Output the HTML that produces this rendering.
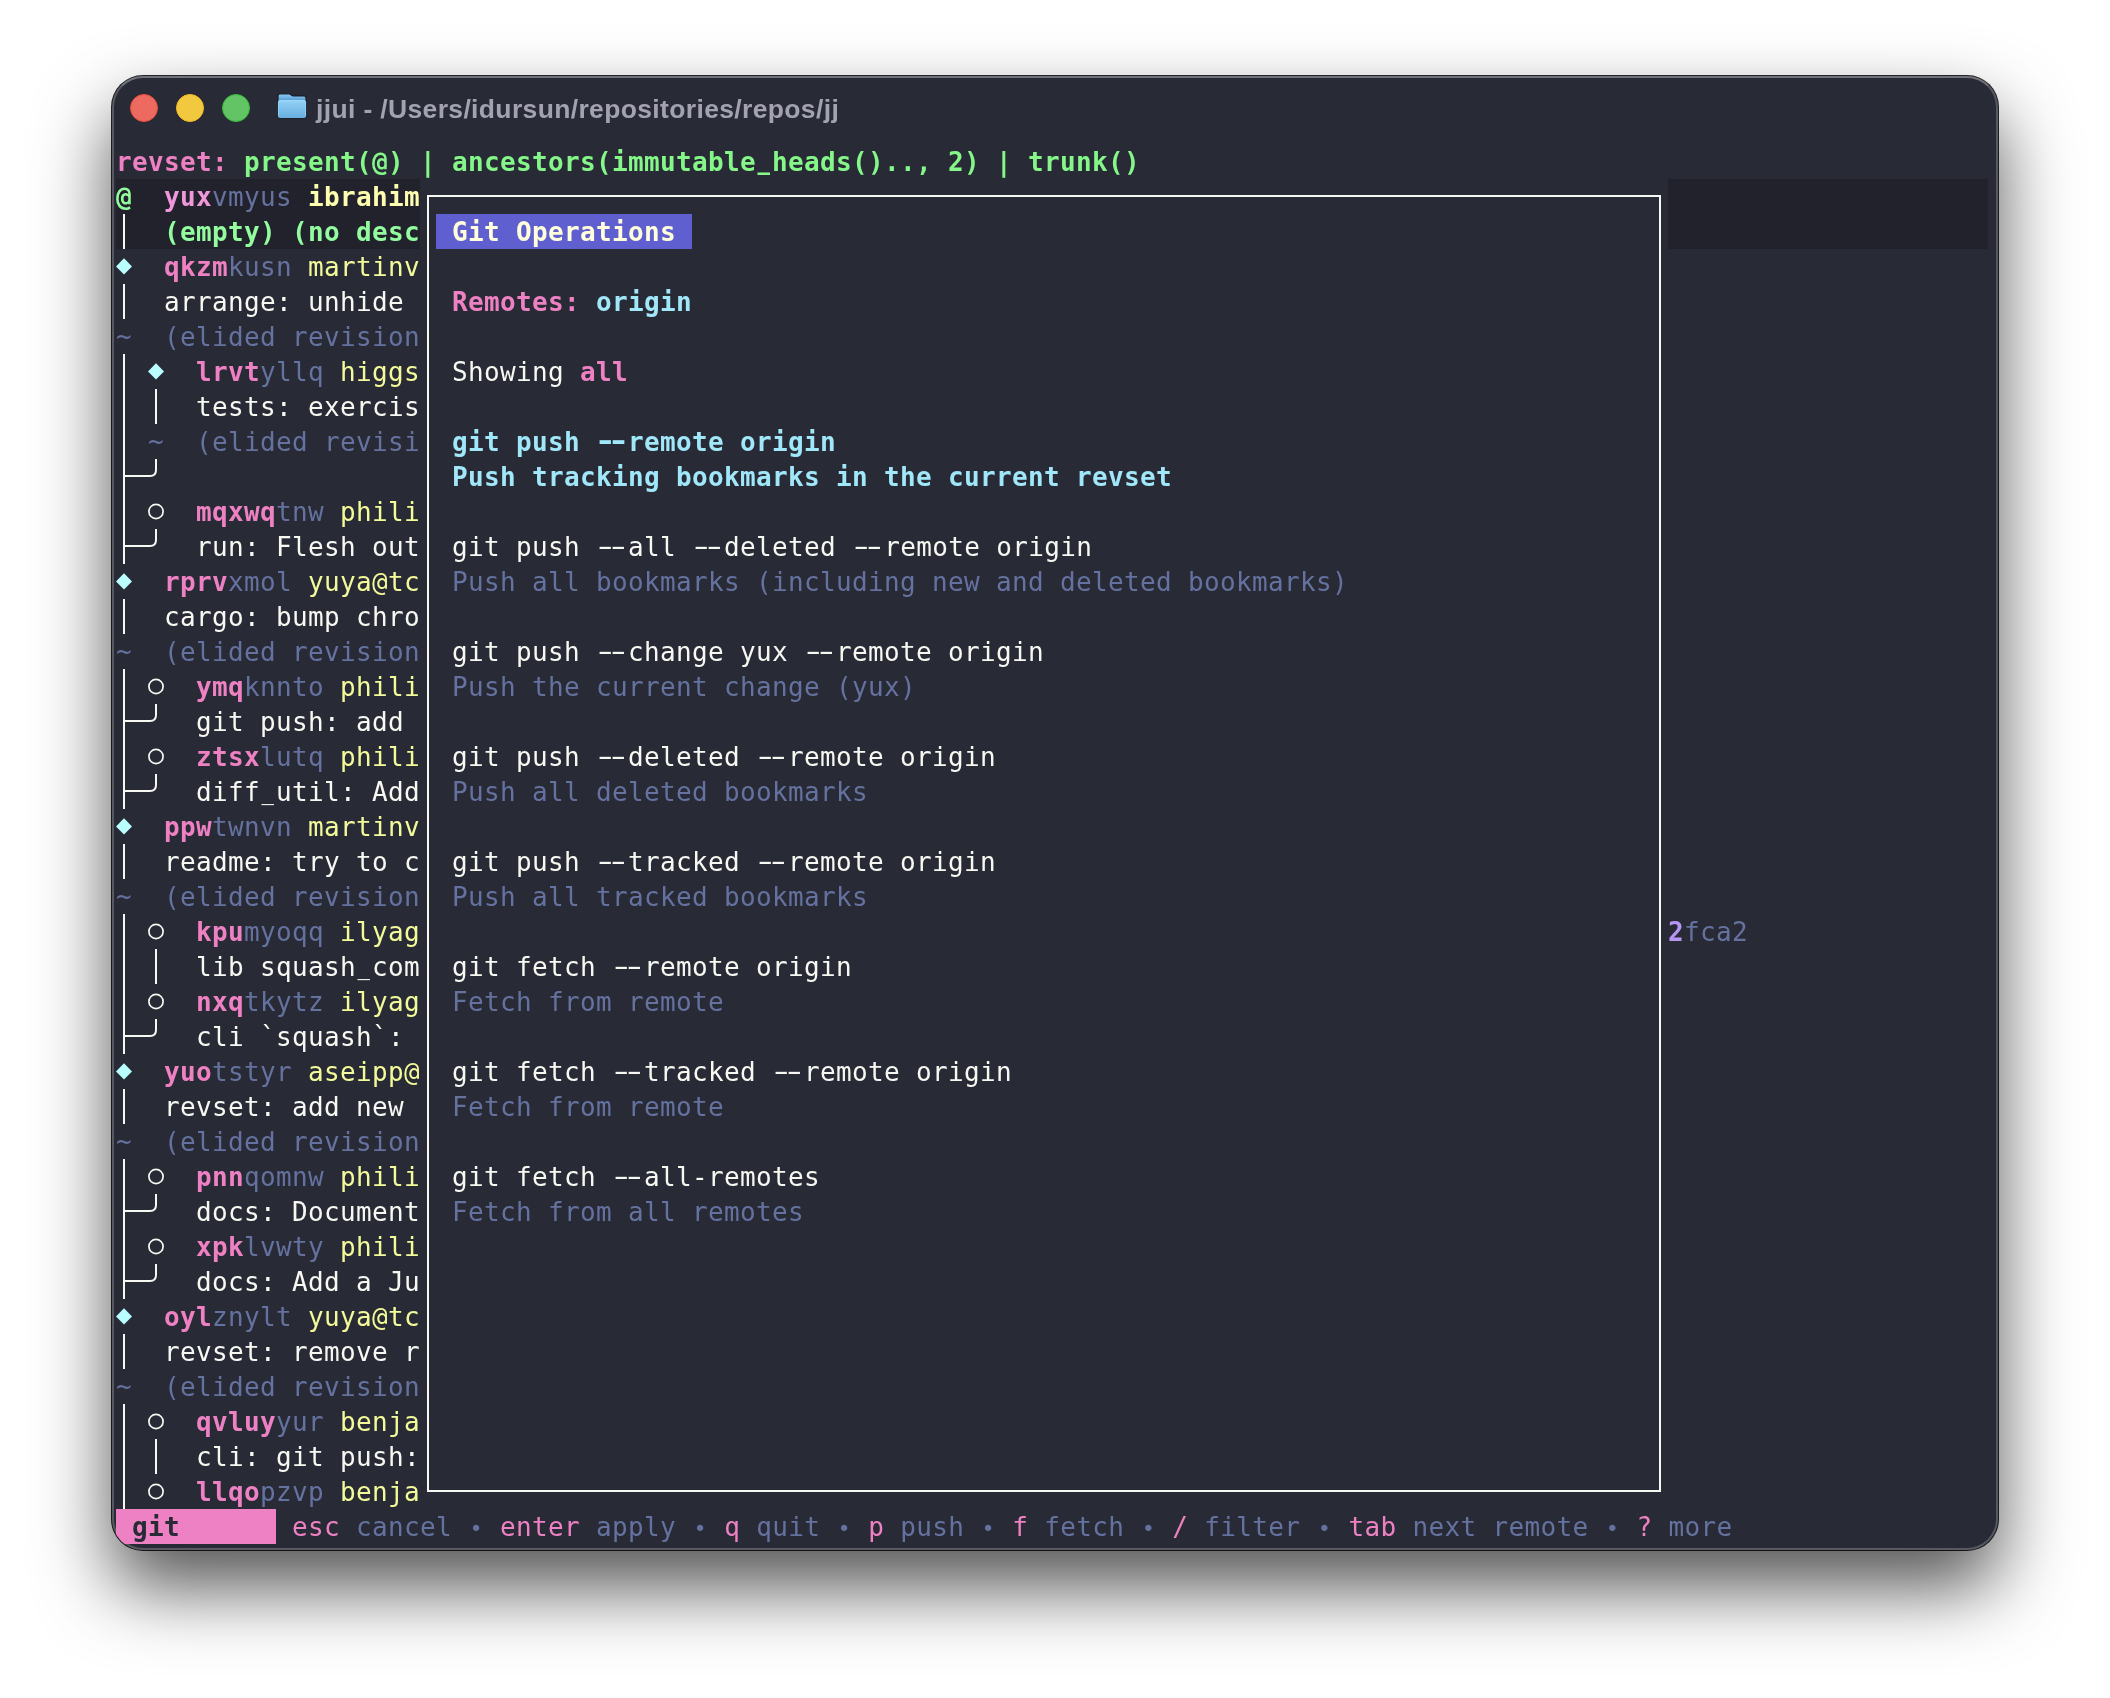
<!DOCTYPE html>
<html lang="en">
<head>
<meta charset="utf-8">
<title>jjui - /Users/idursun/repositories/repos/jj</title>
<style>
html,body{margin:0;padding:0;background:#fff;}
body{position:relative;width:2110px;height:1698px;overflow:hidden;}
.win{position:absolute;left:112px;top:76px;width:1886px;height:1474px;background:#282a35;border-radius:31px;
  box-shadow:0 0 0 1px rgba(0,0,0,.85), 0 37px 75px rgba(0,0,0,.68);}
.win::after{content:"";position:absolute;inset:0;border-radius:31px;border:2px solid rgba(255,255,255,.22);border-top-color:rgba(255,255,255,.34);box-sizing:border-box;pointer-events:none;}
.clip{position:absolute;left:112px;top:76px;width:1886px;height:1474px;border-radius:31px;overflow:hidden;}
.in{position:absolute;left:-112px;top:-76px;width:2110px;height:1698px;will-change:transform;}
.r{position:absolute;display:block;}
.t{position:absolute;height:35px;line-height:35px;white-space:pre;font-family:"DejaVu Sans Mono","Liberation Mono",monospace;font-size:26px;letter-spacing:0.3467px;color:#f8f8f3;padding-top:1px;font-variant-ligatures:none;}
.pb{color:#ee81c3;font-weight:bold} .p{color:#ee81c3}
.gb{color:#85f789;font-weight:bold}
.bg{color:#93fc9f;font-weight:bold} .bm{color:#f097db;font-weight:bold} .by{color:#ffffb0;font-weight:bold}
.y{color:#f3fa9a}
.cb{color:#a1e7fa;font-weight:bold}
.ub{color:#b695f3;font-weight:bold}
.kb{color:#282a35;font-weight:bold}
.ttl{color:#ffffdb;font-weight:bold}
.d{color:#6572a0}
.bl{display:inline-block;width:16px;text-align:center;font-size:22px;letter-spacing:0;color:#6370a0;position:relative;top:0px;line-height:1;}
.w{color:#f8f8f3}
.dt{color:#6572a0;position:relative;top:-1px}
.h1,.h2,.us{display:inline-block;position:relative}
.h1{top:-1px;transform:scaleX(1.69);transform-origin:5.7px 50%}
.h2{top:-1px;transform:scaleX(1.7);transform-origin:9.83px 50%}
.cb .h1{transform:scaleX(1.41);transform-origin:4.2px 50%}
.cb .h2{transform:scaleX(1.44);transform-origin:10.7px 50%}
.us{top:-2px;transform:scaleX(.8)}
.tl{position:absolute;top:94px;width:28px;height:28px;border-radius:50%;box-sizing:border-box;}
.title{position:absolute;left:316px;top:91px;height:36px;line-height:36px;font-family:"Liberation Sans",sans-serif;font-weight:bold;font-size:26.5px;letter-spacing:0.35px;color:#a3a2b2;white-space:pre;}
</style>
</head>
<body>
<div class="win"></div>
<div class="clip"><div class="in">
<div class="tl" style="left:130px;background:#ec6a60;border:1.5px solid #ee4a42"></div>
<div class="tl" style="left:176px;background:#f2c83e;border:1.5px solid #f3bc2b"></div>
<div class="tl" style="left:222px;background:#62c465;border:1.5px solid #36bd39"></div>
<svg class="r" style="left:277px;top:93px" width="30" height="26" viewBox="-1 -0.8 30 26">
<defs><linearGradient id="fb" x1="0" y1="0" x2="0" y2="1"><stop offset="0" stop-color="#8ed1fb"/><stop offset="0.26" stop-color="#5a9ed6"/><stop offset="1" stop-color="#5a9ed6"/></linearGradient>
<linearGradient id="ff" x1="0" y1="0" x2="0" y2="1"><stop offset="0" stop-color="#a0d9f8"/><stop offset="0.12" stop-color="#8ecdf3"/><stop offset="1" stop-color="#69aee0"/></linearGradient></defs>
<path d="M0 2 Q0 0 2 0 H11 Q12 0 12.8 0.8 L13.6 1.6 Q14.2 2.1 15.2 2.1 H26 Q28 2.1 28 4.1 V22.3 Q28 24.3 26 24.3 H2 Q0 24.3 0 22.3Z" fill="url(#fb)" stroke="#1d1d26" stroke-width="1.2"/>
<path d="M0 8.2 Q0 6.2 2 6.2 H26 Q28 6.2 28 8.2 V22.3 Q28 24.3 26 24.3 H2 Q0 24.3 0 22.3Z" fill="url(#ff)"/>
<path d="M0.4 8.2 V22.3 M27.6 8.2 V22.3" stroke="#8fd3fc" stroke-width="0.8" fill="none"/>
</svg>
<div class="title">jjui - /Users/idursun/repositories/repos/jj</div>
<div class="r" style="left:116px;top:179px;width:304px;height:70px;background:#21222b;"></div>
<div class="r" style="left:1668px;top:179px;width:320px;height:70px;background:#21222b;"></div>
<div class="r" style="left:436px;top:214px;width:256px;height:35px;background:#5f5fd0;"></div>
<div class="r" style="left:116px;top:1509px;width:160px;height:35px;background:#ee81c3;"></div>
<!-- graph pane -->
<div class="t" style="left:116px;top:144px"><span class="pb">revset: </span><span class="gb">present(@) | ancestors(immutable<span class="us">_</span>heads().., 2) | trunk()</span></div>
<div class="t" style="left:116px;top:179px"><span class="bg">@</span></div>
<div class="t" style="left:164px;top:179px"><span class="bm">yux</span><span class="d">vmyus</span> <span class="by">ibrahim</span></div>
<div class="r" style="left:123px;top:214.0px;width:2px;height:35.0px;background:#f8f8f3;"></div>
<div class="t" style="left:164px;top:214px"><span class="bg">(empty) (no desc</span></div>
<svg class="r" style="left:116px;top:249px" width="16" height="35" viewBox="0 0 16 35"><path d="M8 9.2 L16 17.4 L8 25.6 L0 17.4Z" fill="#b9fdfe"/></svg>
<div class="t" style="left:164px;top:249px"><span class="pb">qkzm</span><span class="d">kusn</span><span class="y"> martinv</span></div>
<div class="r" style="left:123px;top:284.0px;width:2px;height:35.0px;background:#f8f8f3;"></div>
<div class="t" style="left:164px;top:284px"><span class="w">arrange: unhide</span></div>
<div class="t" style="left:116px;top:319px"><span class="dt">~</span></div>
<div class="t" style="left:164px;top:319px"><span class="d">(elided revision</span></div>
<div class="r" style="left:123px;top:354.0px;width:2px;height:35.0px;background:#f8f8f3;"></div>
<svg class="r" style="left:148px;top:354px" width="16" height="35" viewBox="0 0 16 35"><path d="M8 9.2 L16 17.4 L8 25.6 L0 17.4Z" fill="#b9fdfe"/></svg>
<div class="t" style="left:196px;top:354px"><span class="pb">lrvt</span><span class="d">yllq</span><span class="y"> higgs</span></div>
<div class="r" style="left:123px;top:389.0px;width:2px;height:35.0px;background:#f8f8f3;"></div>
<div class="r" style="left:155px;top:389.0px;width:2px;height:35.0px;background:#f8f8f3;"></div>
<div class="t" style="left:196px;top:389px"><span class="w">tests: exercis</span></div>
<div class="r" style="left:123px;top:424.0px;width:2px;height:35.0px;background:#f8f8f3;"></div>
<div class="t" style="left:148px;top:424px"><span class="dt">~</span></div>
<div class="t" style="left:196px;top:424px"><span class="d">(elided revisi</span></div>
<div class="r" style="left:123px;top:459.0px;width:2px;height:35.0px;background:#f8f8f3;"></div>
<div class="r" style="left:124.0px;top:475px;width:8.0px;height:2px;background:#f8f8f3;"></div>
<div class="r" style="left:132.0px;top:475px;width:16.0px;height:2px;background:#f8f8f3;"></div>
<svg class="r" style="left:148px;top:459px" width="16" height="35" viewBox="0 0 16 35"><path d="M0 17 H2 Q8 17 8 11 V0" fill="none" stroke="#f8f8f3" stroke-width="2"/></svg>
<div class="r" style="left:123px;top:494.0px;width:2px;height:35.0px;background:#f8f8f3;"></div>
<svg class="r" style="left:148px;top:494px" width="16" height="35" viewBox="0 0 16 35"><circle cx="8" cy="17.5" r="7.1" fill="none" stroke="#f8f8f3" stroke-width="1.7"/></svg>
<div class="t" style="left:196px;top:494px"><span class="pb">mqxwq</span><span class="d">tnw</span><span class="y"> phili</span></div>
<div class="r" style="left:123px;top:529.0px;width:2px;height:35.0px;background:#f8f8f3;"></div>
<div class="r" style="left:124.0px;top:545px;width:8.0px;height:2px;background:#f8f8f3;"></div>
<div class="r" style="left:132.0px;top:545px;width:16.0px;height:2px;background:#f8f8f3;"></div>
<svg class="r" style="left:148px;top:529px" width="16" height="35" viewBox="0 0 16 35"><path d="M0 17 H2 Q8 17 8 11 V0" fill="none" stroke="#f8f8f3" stroke-width="2"/></svg>
<div class="t" style="left:196px;top:529px"><span class="w">run: Flesh out</span></div>
<svg class="r" style="left:116px;top:564px" width="16" height="35" viewBox="0 0 16 35"><path d="M8 9.2 L16 17.4 L8 25.6 L0 17.4Z" fill="#b9fdfe"/></svg>
<div class="t" style="left:164px;top:564px"><span class="pb">rprv</span><span class="d">xmol</span><span class="y"> yuya@tc</span></div>
<div class="r" style="left:123px;top:599.0px;width:2px;height:35.0px;background:#f8f8f3;"></div>
<div class="t" style="left:164px;top:599px"><span class="w">cargo: bump chro</span></div>
<div class="t" style="left:116px;top:634px"><span class="dt">~</span></div>
<div class="t" style="left:164px;top:634px"><span class="d">(elided revision</span></div>
<div class="r" style="left:123px;top:669.0px;width:2px;height:35.0px;background:#f8f8f3;"></div>
<svg class="r" style="left:148px;top:669px" width="16" height="35" viewBox="0 0 16 35"><circle cx="8" cy="17.5" r="7.1" fill="none" stroke="#f8f8f3" stroke-width="1.7"/></svg>
<div class="t" style="left:196px;top:669px"><span class="pb">ymq</span><span class="d">knnto</span><span class="y"> phili</span></div>
<div class="r" style="left:123px;top:704.0px;width:2px;height:35.0px;background:#f8f8f3;"></div>
<div class="r" style="left:124.0px;top:720px;width:8.0px;height:2px;background:#f8f8f3;"></div>
<div class="r" style="left:132.0px;top:720px;width:16.0px;height:2px;background:#f8f8f3;"></div>
<svg class="r" style="left:148px;top:704px" width="16" height="35" viewBox="0 0 16 35"><path d="M0 17 H2 Q8 17 8 11 V0" fill="none" stroke="#f8f8f3" stroke-width="2"/></svg>
<div class="t" style="left:196px;top:704px"><span class="w">git push: add</span></div>
<div class="r" style="left:123px;top:739.0px;width:2px;height:35.0px;background:#f8f8f3;"></div>
<svg class="r" style="left:148px;top:739px" width="16" height="35" viewBox="0 0 16 35"><circle cx="8" cy="17.5" r="7.1" fill="none" stroke="#f8f8f3" stroke-width="1.7"/></svg>
<div class="t" style="left:196px;top:739px"><span class="pb">ztsx</span><span class="d">lutq</span><span class="y"> phili</span></div>
<div class="r" style="left:123px;top:774.0px;width:2px;height:35.0px;background:#f8f8f3;"></div>
<div class="r" style="left:124.0px;top:790px;width:8.0px;height:2px;background:#f8f8f3;"></div>
<div class="r" style="left:132.0px;top:790px;width:16.0px;height:2px;background:#f8f8f3;"></div>
<svg class="r" style="left:148px;top:774px" width="16" height="35" viewBox="0 0 16 35"><path d="M0 17 H2 Q8 17 8 11 V0" fill="none" stroke="#f8f8f3" stroke-width="2"/></svg>
<div class="t" style="left:196px;top:774px"><span class="w">diff<span class="us">_</span>util: Add</span></div>
<svg class="r" style="left:116px;top:809px" width="16" height="35" viewBox="0 0 16 35"><path d="M8 9.2 L16 17.4 L8 25.6 L0 17.4Z" fill="#b9fdfe"/></svg>
<div class="t" style="left:164px;top:809px"><span class="pb">ppw</span><span class="d">twnvn</span><span class="y"> martinv</span></div>
<div class="r" style="left:123px;top:844.0px;width:2px;height:35.0px;background:#f8f8f3;"></div>
<div class="t" style="left:164px;top:844px"><span class="w">readme: try to c</span></div>
<div class="t" style="left:116px;top:879px"><span class="dt">~</span></div>
<div class="t" style="left:164px;top:879px"><span class="d">(elided revision</span></div>
<div class="r" style="left:123px;top:914.0px;width:2px;height:35.0px;background:#f8f8f3;"></div>
<svg class="r" style="left:148px;top:914px" width="16" height="35" viewBox="0 0 16 35"><circle cx="8" cy="17.5" r="7.1" fill="none" stroke="#f8f8f3" stroke-width="1.7"/></svg>
<div class="t" style="left:196px;top:914px"><span class="pb">kpu</span><span class="d">myoqq</span><span class="y"> ilyag</span></div>
<div class="r" style="left:123px;top:949.0px;width:2px;height:35.0px;background:#f8f8f3;"></div>
<div class="r" style="left:155px;top:949.0px;width:2px;height:35.0px;background:#f8f8f3;"></div>
<div class="t" style="left:196px;top:949px"><span class="w">lib squash<span class="us">_</span>com</span></div>
<div class="r" style="left:123px;top:984.0px;width:2px;height:35.0px;background:#f8f8f3;"></div>
<svg class="r" style="left:148px;top:984px" width="16" height="35" viewBox="0 0 16 35"><circle cx="8" cy="17.5" r="7.1" fill="none" stroke="#f8f8f3" stroke-width="1.7"/></svg>
<div class="t" style="left:196px;top:984px"><span class="pb">nxq</span><span class="d">tkytz</span><span class="y"> ilyag</span></div>
<div class="r" style="left:123px;top:1019.0px;width:2px;height:35.0px;background:#f8f8f3;"></div>
<div class="r" style="left:124.0px;top:1035px;width:8.0px;height:2px;background:#f8f8f3;"></div>
<div class="r" style="left:132.0px;top:1035px;width:16.0px;height:2px;background:#f8f8f3;"></div>
<svg class="r" style="left:148px;top:1019px" width="16" height="35" viewBox="0 0 16 35"><path d="M0 17 H2 Q8 17 8 11 V0" fill="none" stroke="#f8f8f3" stroke-width="2"/></svg>
<div class="t" style="left:196px;top:1019px"><span class="w">cli `squash`:</span></div>
<svg class="r" style="left:116px;top:1054px" width="16" height="35" viewBox="0 0 16 35"><path d="M8 9.2 L16 17.4 L8 25.6 L0 17.4Z" fill="#b9fdfe"/></svg>
<div class="t" style="left:164px;top:1054px"><span class="pb">yuo</span><span class="d">tstyr</span><span class="y"> aseipp@</span></div>
<div class="r" style="left:123px;top:1089.0px;width:2px;height:35.0px;background:#f8f8f3;"></div>
<div class="t" style="left:164px;top:1089px"><span class="w">revset: add new</span></div>
<div class="t" style="left:116px;top:1124px"><span class="dt">~</span></div>
<div class="t" style="left:164px;top:1124px"><span class="d">(elided revision</span></div>
<div class="r" style="left:123px;top:1159.0px;width:2px;height:35.0px;background:#f8f8f3;"></div>
<svg class="r" style="left:148px;top:1159px" width="16" height="35" viewBox="0 0 16 35"><circle cx="8" cy="17.5" r="7.1" fill="none" stroke="#f8f8f3" stroke-width="1.7"/></svg>
<div class="t" style="left:196px;top:1159px"><span class="pb">pnn</span><span class="d">qomnw</span><span class="y"> phili</span></div>
<div class="r" style="left:123px;top:1194.0px;width:2px;height:35.0px;background:#f8f8f3;"></div>
<div class="r" style="left:124.0px;top:1210px;width:8.0px;height:2px;background:#f8f8f3;"></div>
<div class="r" style="left:132.0px;top:1210px;width:16.0px;height:2px;background:#f8f8f3;"></div>
<svg class="r" style="left:148px;top:1194px" width="16" height="35" viewBox="0 0 16 35"><path d="M0 17 H2 Q8 17 8 11 V0" fill="none" stroke="#f8f8f3" stroke-width="2"/></svg>
<div class="t" style="left:196px;top:1194px"><span class="w">docs: Document</span></div>
<div class="r" style="left:123px;top:1229.0px;width:2px;height:35.0px;background:#f8f8f3;"></div>
<svg class="r" style="left:148px;top:1229px" width="16" height="35" viewBox="0 0 16 35"><circle cx="8" cy="17.5" r="7.1" fill="none" stroke="#f8f8f3" stroke-width="1.7"/></svg>
<div class="t" style="left:196px;top:1229px"><span class="pb">xpk</span><span class="d">lvwty</span><span class="y"> phili</span></div>
<div class="r" style="left:123px;top:1264.0px;width:2px;height:35.0px;background:#f8f8f3;"></div>
<div class="r" style="left:124.0px;top:1280px;width:8.0px;height:2px;background:#f8f8f3;"></div>
<div class="r" style="left:132.0px;top:1280px;width:16.0px;height:2px;background:#f8f8f3;"></div>
<svg class="r" style="left:148px;top:1264px" width="16" height="35" viewBox="0 0 16 35"><path d="M0 17 H2 Q8 17 8 11 V0" fill="none" stroke="#f8f8f3" stroke-width="2"/></svg>
<div class="t" style="left:196px;top:1264px"><span class="w">docs: Add a Ju</span></div>
<svg class="r" style="left:116px;top:1299px" width="16" height="35" viewBox="0 0 16 35"><path d="M8 9.2 L16 17.4 L8 25.6 L0 17.4Z" fill="#b9fdfe"/></svg>
<div class="t" style="left:164px;top:1299px"><span class="pb">oyl</span><span class="d">znylt</span><span class="y"> yuya@tc</span></div>
<div class="r" style="left:123px;top:1334.0px;width:2px;height:35.0px;background:#f8f8f3;"></div>
<div class="t" style="left:164px;top:1334px"><span class="w">revset: remove r</span></div>
<div class="t" style="left:116px;top:1369px"><span class="dt">~</span></div>
<div class="t" style="left:164px;top:1369px"><span class="d">(elided revision</span></div>
<div class="r" style="left:123px;top:1404.0px;width:2px;height:35.0px;background:#f8f8f3;"></div>
<svg class="r" style="left:148px;top:1404px" width="16" height="35" viewBox="0 0 16 35"><circle cx="8" cy="17.5" r="7.1" fill="none" stroke="#f8f8f3" stroke-width="1.7"/></svg>
<div class="t" style="left:196px;top:1404px"><span class="pb">qvluy</span><span class="d">yur</span><span class="y"> benja</span></div>
<div class="r" style="left:123px;top:1439.0px;width:2px;height:35.0px;background:#f8f8f3;"></div>
<div class="r" style="left:155px;top:1439.0px;width:2px;height:35.0px;background:#f8f8f3;"></div>
<div class="t" style="left:196px;top:1439px"><span class="w">cli: git push:</span></div>
<div class="r" style="left:123px;top:1474.0px;width:2px;height:35.0px;background:#f8f8f3;"></div>
<svg class="r" style="left:148px;top:1474px" width="16" height="35" viewBox="0 0 16 35"><circle cx="8" cy="17.5" r="7.1" fill="none" stroke="#f8f8f3" stroke-width="1.7"/></svg>
<div class="t" style="left:196px;top:1474px"><span class="pb">llqo</span><span class="d">pzvp</span><span class="y"> benja</span></div>
<!-- git operations modal -->
<div class="r" style="left:427px;top:195px;width:1234px;height:2px;background:#f8f8f3;"></div>
<div class="r" style="left:427px;top:1490px;width:1234px;height:2px;background:#f8f8f3;"></div>
<div class="r" style="left:427px;top:195px;width:2px;height:1297px;background:#f8f8f3;"></div>
<div class="r" style="left:1659px;top:195px;width:2px;height:1297px;background:#f8f8f3;"></div>
<div class="t" style="left:436px;top:214px"><span class="ttl"> Git Operations </span></div>
<div class="t" style="left:452px;top:284px"><span class="pb">Remotes: </span><span class="cb">origin</span></div>
<div class="t" style="left:452px;top:354px"><span class="w">Showing </span><span class="pb">all</span></div>
<div class="t" style="left:452px;top:424px"><span class="cb">git push <span class="h1">-</span><span class="h2">-</span>remote origin</span></div>
<div class="t" style="left:452px;top:459px"><span class="cb">Push tracking bookmarks in the current revset</span></div>
<div class="t" style="left:452px;top:529px"><span class="w">git push <span class="h1">-</span><span class="h2">-</span>all <span class="h1">-</span><span class="h2">-</span>deleted <span class="h1">-</span><span class="h2">-</span>remote origin</span></div>
<div class="t" style="left:452px;top:564px"><span class="d">Push all bookmarks (including new and deleted bookmarks)</span></div>
<div class="t" style="left:452px;top:634px"><span class="w">git push <span class="h1">-</span><span class="h2">-</span>change yux <span class="h1">-</span><span class="h2">-</span>remote origin</span></div>
<div class="t" style="left:452px;top:669px"><span class="d">Push the current change (yux)</span></div>
<div class="t" style="left:452px;top:739px"><span class="w">git push <span class="h1">-</span><span class="h2">-</span>deleted <span class="h1">-</span><span class="h2">-</span>remote origin</span></div>
<div class="t" style="left:452px;top:774px"><span class="d">Push all deleted bookmarks</span></div>
<div class="t" style="left:452px;top:844px"><span class="w">git push <span class="h1">-</span><span class="h2">-</span>tracked <span class="h1">-</span><span class="h2">-</span>remote origin</span></div>
<div class="t" style="left:452px;top:879px"><span class="d">Push all tracked bookmarks</span></div>
<div class="t" style="left:452px;top:949px"><span class="w">git fetch <span class="h1">-</span><span class="h2">-</span>remote origin</span></div>
<div class="t" style="left:452px;top:984px"><span class="d">Fetch from remote</span></div>
<div class="t" style="left:452px;top:1054px"><span class="w">git fetch <span class="h1">-</span><span class="h2">-</span>tracked <span class="h1">-</span><span class="h2">-</span>remote origin</span></div>
<div class="t" style="left:452px;top:1089px"><span class="d">Fetch from remote</span></div>
<div class="t" style="left:452px;top:1159px"><span class="w">git fetch <span class="h1">-</span><span class="h2">-</span>all-remotes</span></div>
<div class="t" style="left:452px;top:1194px"><span class="d">Fetch from all remotes</span></div>
<div class="t" style="left:1668px;top:914px"><span class="ub">2</span><span class="d">fca2</span></div>
<!-- status bar -->
<div class="t" style="left:116px;top:1509px"><span class="kb"> git</span></div>
<div class="t" style="left:292px;top:1509px"><span class="p">esc</span><span class="d"> cancel</span> <span class="bl">•</span> <span class="p">enter</span><span class="d"> apply</span> <span class="bl">•</span> <span class="p">q</span><span class="d"> quit</span> <span class="bl">•</span> <span class="p">p</span><span class="d"> push</span> <span class="bl">•</span> <span class="p">f</span><span class="d"> fetch</span> <span class="bl">•</span> <span class="p">/</span><span class="d"> filter</span> <span class="bl">•</span> <span class="p">tab</span><span class="d"> next remote</span> <span class="bl">•</span> <span class="p">?</span><span class="d"> more</span></div>
</div></div>
</body>
</html>
